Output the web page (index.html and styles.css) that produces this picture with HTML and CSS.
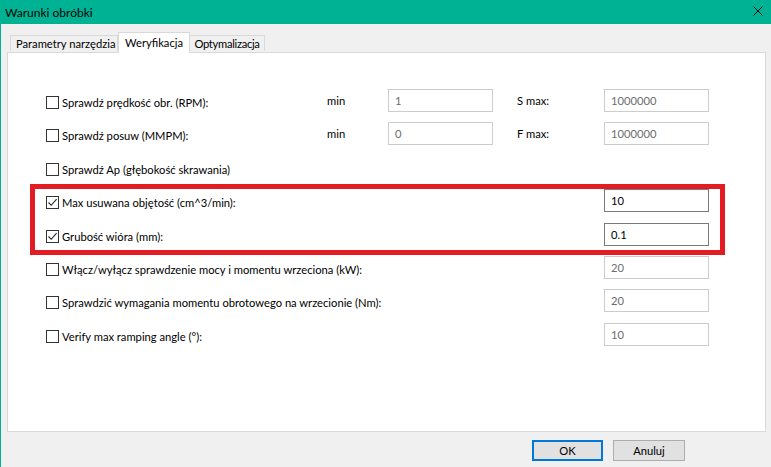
FILE: index.html
```html
<!DOCTYPE html>
<html lang="pl">
<head>
<meta charset="utf-8">
<title>Warunki obróbki</title>
<link rel="stylesheet" href="styles.css">
</head>
<body>
<div class="window">
  <div class="titlebar">
    <span class="title">Warunki obróbki</span>
    <svg class="close" width="10" height="10" viewBox="0 0 10 10"><path d="M0.5 0.5 L9.5 9.5 M9.5 0.5 L0.5 9.5" stroke="#111" stroke-width="1" fill="none"/></svg>
  </div>
  <div class="client">
    <div class="tabs">
      <div class="tab t1">Parametry narzędzia</div>
      <div class="tab active">Weryfikacja</div>
      <div class="tab t3">Optymalizacja</div>
    </div>
    <div class="panel">
      <div class="row">
        <label class="check"><span class="box"></span>Sprawdź prędkość obr. (RPM):</label>
        <span class="lbl">min</span>
        <input class="field" value="1" disabled>
        <span class="lbl col5">S max:</span>
        <input class="field" value="1000000" disabled>
      </div>
      <div class="row">
        <label class="check"><span class="box"></span>Sprawdź posuw (MMPM):</label>
        <span class="lbl">min</span>
        <input class="field" value="0" disabled>
        <span class="lbl col5">F max:</span>
        <input class="field" value="1000000" disabled>
      </div>
      <div class="row">
        <label class="check wide"><span class="box"></span>Sprawdź Ap (głębokość skrawania)</label>
      </div>
      <div class="row">
        <label class="check wide"><span class="box checked"><svg width="11" height="11" viewBox="0 0 11 11"><path d="M1.5 5.5 L4.2 8.3 L9.6 2.2" stroke="#222" stroke-width="1.1" fill="none"/></svg></span>Max usuwana objętość (cm^3/min):</label>
        <input class="field on col6" value="10">
      </div>
      <div class="row">
        <label class="check wide"><span class="box checked"><svg width="11" height="11" viewBox="0 0 11 11"><path d="M1.5 5.5 L4.2 8.3 L9.6 2.2" stroke="#222" stroke-width="1.1" fill="none"/></svg></span>Grubość wióra (mm):</label>
        <input class="field on col6" value="0.1">
      </div>
      <div class="row">
        <label class="check wide"><span class="box"></span>Włącz/wyłącz sprawdzenie mocy i momentu wrzeciona (kW):</label>
        <input class="field col6" value="20" disabled>
      </div>
      <div class="row">
        <label class="check wide"><span class="box"></span>Sprawdzić wymagania momentu obrotowego na wrzecionie (Nm):</label>
        <input class="field col6" value="20" disabled>
      </div>
      <div class="row">
        <label class="check wide"><span class="box"></span>Verify max ramping angle (°):</label>
        <input class="field col6" value="10" disabled>
      </div>
    </div>
    <div class="buttons">
      <button class="btn default">OK</button>
      <button class="btn">Anuluj</button>
    </div>
  </div>
  <div class="highlight"></div>
</div>
</body>
</html>
```

FILE: styles.css
```css
* { box-sizing: border-box; }
html, body { margin: 0; padding: 0; }
body {
  width: 771px;
  height: 467px;
  overflow: hidden;
  background: #f0f0f0;
  font-family: Lato, "Liberation Sans", Arial, sans-serif;
  font-size: 11.2px;
  color: #000;
}
.window {
  position: relative;
  width: 771px;
  height: 467px;
  border-left: 1px solid #00b294;
  background: #f0f0f0;
}
.titlebar {
  height: 24px;
  background: #00b294;
  display: flex;
  align-items: center;
  justify-content: space-between;
  padding: 0 8px 0 4px;
}
.title { color: #000; font-size: 12px; }
.close { display: block; margin-top: -2px; }
.client {
  padding: 8px 0 0 6px;
}
.tabs {
  display: flex;
  align-items: flex-end;
  height: 20px;
  padding-left: 3px;
  position: relative;
  z-index: 1;
}
.tab {
  height: 16px;
  border: 1px solid #d9d9d9;
  border-bottom: none;
  background: #f0f0f0;
  padding: 0 4px;
  line-height: 15px;
  margin-bottom: 1px;
  white-space: nowrap;
}
.tab.t1 { width: 108px; padding-left: 5px; }
.tab.t3 { width: 75px; padding: 0; text-align: center; letter-spacing: -0.3px; }
.tab + .tab { border-left: none; }
.tab.active {
  height: 21px;
  width: 72px;
  background: #fff;
  border-left: 1px solid #d9d9d9;
  margin-bottom: -1px;
  padding: 0;
  text-align: center;
  line-height: 19px;
}
.tab.active + .tab { border-left: none; }
.panel {
  width: 759px;
  height: 380px;
  border: 1px solid #d9d9d9;
  background: #fff;
  padding: 36px 0 0 38px;
  display: flex;
  flex-direction: column;
  gap: 10.4px;
}
.row {
  display: grid;
  grid-template-columns: 281px 61px 105px 24px 87px 105px;
  height: 23px;
  align-items: center;
}
.check {
  display: flex;
  align-items: center;
  white-space: nowrap;
  margin-top: 4px;
}
.check.wide { grid-column: 1 / 5; }
.box {
  width: 13px;
  height: 13px;
  border: 1px solid #333;
  background: #fff;
  margin-right: 3px;
  flex: none;
  display: flex;
  align-items: center;
  justify-content: center;
}
.box svg { display: block; }
.lbl { color: #000; }
.col5 { grid-column: 5; }
.col6 { grid-column: 6; }
.field {
  width: 105px;
  height: 23px;
  border: 1px solid #cccccc;
  background: #fff;
  color: #6d6d6d;
  font-family: Lato, "Liberation Sans", Arial, sans-serif;
  font-size: 11.2px;
  padding: 0 6px;
  margin: 0;
  outline: none;
}
.field.on {
  border-color: #7a7a7a;
  color: #000;
}
.buttons {
  display: flex;
  justify-content: flex-end;
  gap: 10px;
  margin-top: 8px;
  padding-right: 86px;
}
.btn {
  height: 21px;
  width: 72px;
  border: 1px solid #adadad;
  background: #e1e1e1;
  font-family: Lato, "Liberation Sans", Arial, sans-serif;
  font-size: 11.2px;
  color: #000;
  padding: 0;
  margin: 0;
}
.btn.default {
  width: 71px;
  border: 1px solid #0078d7;
  box-shadow: inset 0 0 0 1px #0078d7;
}
.highlight {
  position: absolute;
  left: 29px;
  top: 184px;
  width: 695px;
  height: 71px;
  border: 5px solid #e31b23;
  pointer-events: none;
}
```
